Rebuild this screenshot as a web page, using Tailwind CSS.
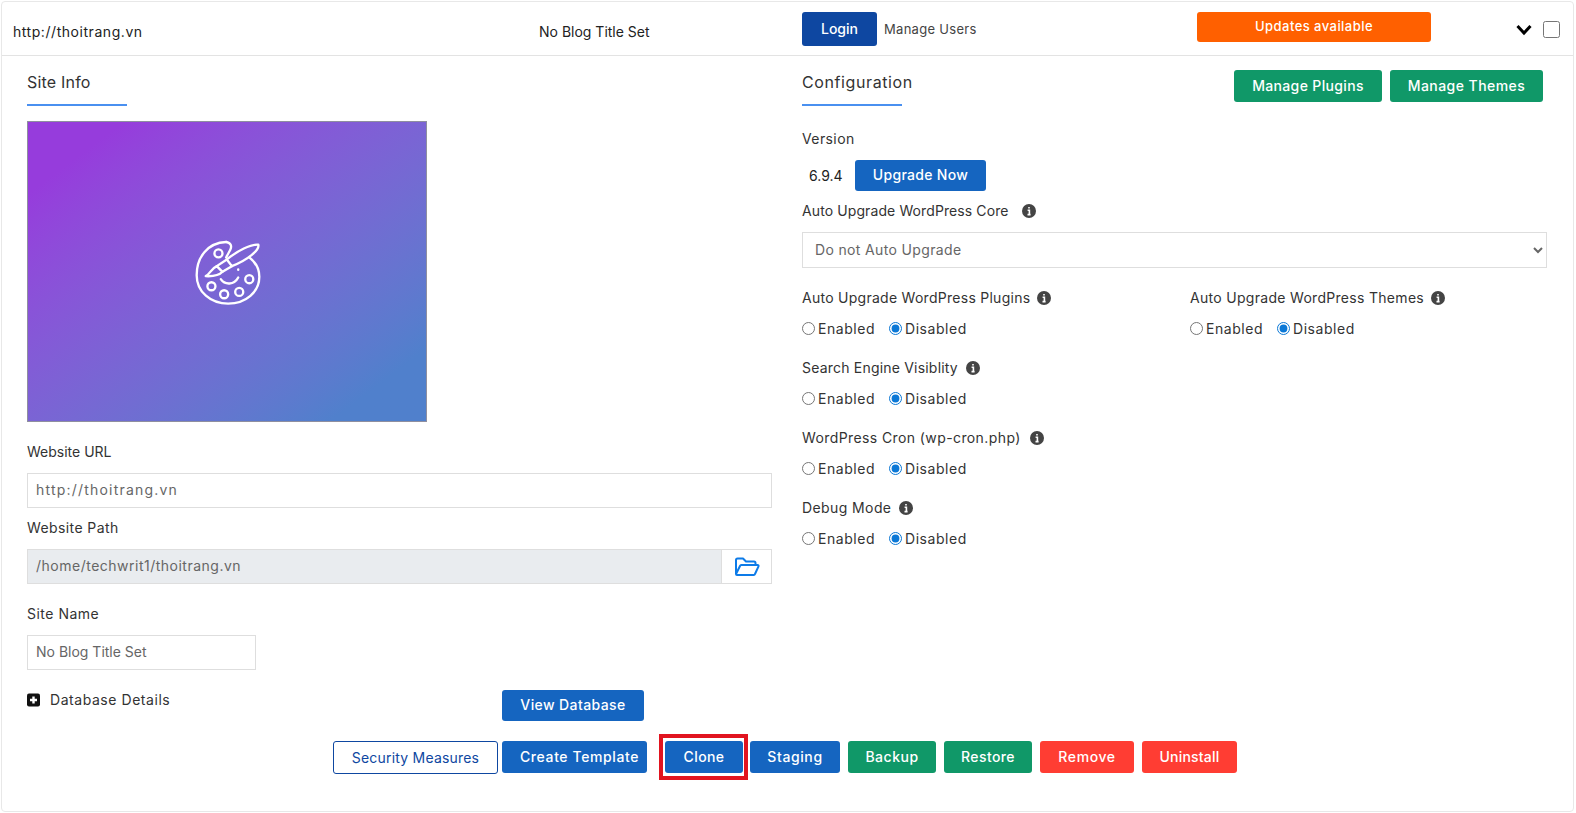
<!DOCTYPE html>
<html>
<head>
<meta charset="utf-8">
<script src="https://cdn.jsdelivr.net/npm/@tailwindcss/browser@4"></script>
<title>Site details</title>
</head>
<body class="bg-white font-['Inter',sans-serif] text-[14px] text-[#333]">
<div class="mx-[1px] mt-[1px] h-[811px] w-[1573px] rounded border border-[#e8e8e8]">

  <!-- header row -->
  <div class="flex h-[54px] items-start border-b border-[#e3e3e3]">
    <div class="w-[537px] pl-[11px] pt-[21px] leading-[18px] tracking-[0.55px] text-[#222]">http://thoitrang.vn</div>
    <div class="w-[263px] pt-[21px] leading-[18px] text-[#222]">No Blog Title Set</div>
    <div class="mt-[10px] flex h-[34px] w-[75px] items-center justify-center rounded-[3px] bg-[#0e47a1] pb-[2px] font-medium text-white">Login</div>
    <div class="ml-[7px] w-[313px] pt-[18px] text-[13px] leading-[18px] tracking-[0.3px] text-[#444]">Manage Users</div>
    <div class="mt-[10px] flex h-[30px] w-[234px] items-center justify-center rounded-[3px] bg-[#ff6000] pb-[1px] text-[13px] font-medium tracking-[0.45px] text-white">Updates available</div>
    <svg class="ml-[85px] mt-[22px]" width="16" height="12" viewBox="0 0 16 12"><path d="M1.5 2 L8 9 L14.5 2" fill="none" stroke="#000" stroke-width="3"/></svg>
    <input type="checkbox" class="ml-[11px] mt-[19px] h-[17px] w-[17px]">
  </div>

  <!-- two columns -->
  <div class="grid grid-cols-[745px_745px] gap-x-[30px] pl-[25px]">

    <!-- site info -->
    <div>
      <div class="pt-[14px] text-[16px] leading-[24px] tracking-[0.2px] text-[#333]">Site Info</div>
      <div class="mt-[10px] h-[2px] w-[100px] bg-[#4a90f0]"></div>
      <div class="mt-[15px] flex h-[301px] w-[400px] items-center justify-center border border-[#8f8f9f] bg-gradient-to-br from-[#963cdc] from-[12%] to-[#5080cc] to-[88%]">
        <svg class="mt-[3px]" width="67" height="67" viewBox="130 60 200 200" fill="none" stroke="#fff" stroke-width="7" stroke-linecap="round" stroke-linejoin="round">
          <path d="M226 66 C170 68 138 112 138 165 C138 215 180 250 232 250 C285 250 325 215 325 170 C325 145 312 125 295 112"/>
          <path d="M226 66 C240 68 244 78 238 90 C234 98 230 104 226 112"/>
          <path d="M228 118 C260 92 300 72 322 74 C326 90 290 120 243 138 Z"/>
          <path d="M198 138 L228 118 M215 155 L243 138"/>
          <path d="M198 138 L215 155 C205 166 185 169 165 168 C178 162 180 146 198 138 Z"/>
          <circle cx="203" cy="100" r="12"/><circle cx="295" cy="177" r="12"/><circle cx="265" cy="215" r="12"/><circle cx="220" cy="222" r="12"/><circle cx="182" cy="198" r="12"/>
          <path d="M210 177 C222 195 250 195 262 172"/>
          <path d="M262 148 L262 149"/>
        </svg>
      </div>

      <div class="mt-[20px] leading-[20px]">Website URL</div>
      <input class="mt-[11px] block h-[35px] w-full border border-[#dedede] px-[8px] pb-[2px] text-[14px] tracking-[1.2px] text-[#666]" value="http://thoitrang.vn">
      <div class="mt-[10px] leading-[20px] tracking-[0.4px]">Website Path</div>
      <div class="mt-[11px] flex h-[35px]">
        <input class="h-full flex-1 border border-[#dedede] bg-[#e9ecef] px-[8px] pb-[2px] text-[14px] tracking-[0.5px] text-[#666]" value="/home/techwrit1/thoitrang.vn">
        <div class="flex w-[50px] items-center justify-center border border-l-0 border-[#dedede]">
          <svg width="26" height="20" viewBox="0 0 26 20" fill="none" stroke="#0d7be8" stroke-width="2" stroke-linejoin="round"><path d="M2 17 V3 a1.5 1.5 0 0 1 1.5 -1.5 H9 L12 4.5 H20 a1.5 1.5 0 0 1 1.5 1.5 V8"/><path d="M2 17 L6 9 a1.5 1.5 0 0 1 1.3 -1 H23.5 a1 1 0 0 1 1 1.4 L21 17 a1.5 1.5 0 0 1 -1.3 1 H3 a1 1 0 0 1 -1 -1 Z"/></svg>
        </div>
      </div>
      <div class="mt-[20px] leading-[20px] tracking-[0.5px]">Site Name</div>
      <input class="mt-[11px] block h-[35px] w-[229px] border border-[#dedede] px-[8px] pb-[2px] text-[14px] text-[#666]" value="No Blog Title Set">

      <div class="mt-[20px] flex items-start">
        <div class="flex w-[475px] items-center">
          <svg width="13" height="14" viewBox="0 0 13 14"><rect x="0" y="0.5" width="13" height="13" rx="2" fill="#111"/><path d="M6.5 3.5 V10.5 M3 7 H10" stroke="#fff" stroke-width="2.4"/></svg>
          <span class="ml-[10px] leading-[20px] tracking-[0.55px]">Database Details</span>
        </div>
        <div class="flex h-[31px] w-[142px] items-center justify-center rounded-[3px] bg-[#1565c0] pb-[2px] font-medium tracking-[0.4px] text-white">View Database</div>
      </div>
    </div>

    <!-- configuration -->
    <div>
      <div class="flex items-start justify-between">
        <div>
          <div class="pt-[14px] text-[16px] leading-[24px] tracking-[0.6px] text-[#333]">Configuration</div>
          <div class="mt-[10px] h-[2px] w-[100px] bg-[#4a90f0]"></div>
        </div>
        <div class="mr-[4px] mt-[14px] flex gap-[8px]">
          <div class="flex h-[32px] w-[148px] items-center justify-center rounded-[3px] bg-[#109868] pb-[2px] font-medium tracking-[0.35px] text-white">Manage Plugins</div>
          <div class="flex h-[32px] w-[153px] items-center justify-center rounded-[3px] bg-[#109868] pb-[2px] font-medium tracking-[0.45px] text-white">Manage Themes</div>
        </div>
      </div>

      <div class="mt-[23px] leading-[20px] tracking-[0.4px]">Version</div>
      <div class="mt-[11px] flex h-[31px] items-center">
        <span class="ml-[7px] w-[46px] text-[#222]">6.9.4</span>
        <div class="flex h-[31px] w-[131px] items-center justify-center rounded-[3px] bg-[#1565c0] pb-[2px] font-medium tracking-[0.3px] text-white">Upgrade Now</div>
      </div>
      <div class="mt-[10px] flex items-center gap-[13px] leading-[20px] tracking-[0.1px]">Auto Upgrade WordPress Core
        <svg width="14" height="14" viewBox="0 0 14 14"><circle cx="7" cy="7" r="7" fill="#444"/><path d="M7 3 V4.6 M5.6 6.2 H7.4 V10.4 M5.5 10.6 H8.6" stroke="#fff" stroke-width="1.6" fill="none"/></svg>
      </div>
      <select class="mt-[11px] block h-[36px] w-full border border-[#dedede] bg-white pb-[2px] pl-[8px] text-[14px] tracking-[0.35px] text-[#666]">
        <option>Do not Auto Upgrade</option>
      </select>

      <div class="mt-[20px] grid grid-cols-[388px_1fr]">
        <div>
          <div class="flex items-center gap-[7px] leading-[20px] tracking-[0.27px]">Auto Upgrade WordPress Plugins
            <svg width="14" height="14" viewBox="0 0 14 14"><circle cx="7" cy="7" r="7" fill="#444"/><path d="M7 3 V4.6 M5.6 6.2 H7.4 V10.4 M5.5 10.6 H8.6" stroke="#fff" stroke-width="1.6" fill="none"/></svg>
          </div>
          <div class="mt-[10px] flex h-[20px] items-center tracking-[0.55px]">
            <input type="radio" name="plugins" class="h-[13px] w-[13px] accent-[#0b78d6]"><span class="ml-[3px] w-[71px]">Enabled</span>
            <input type="radio" name="plugins" class="h-[13px] w-[13px] accent-[#0b78d6]" checked><span class="ml-[3px]">Disabled</span>
          </div>
        </div>
        <div>
          <div class="flex items-center gap-[7px] leading-[20px] tracking-[0.3px]">Auto Upgrade WordPress Themes
            <svg width="14" height="14" viewBox="0 0 14 14"><circle cx="7" cy="7" r="7" fill="#444"/><path d="M7 3 V4.6 M5.6 6.2 H7.4 V10.4 M5.5 10.6 H8.6" stroke="#fff" stroke-width="1.6" fill="none"/></svg>
          </div>
          <div class="mt-[10px] flex h-[20px] items-center tracking-[0.55px]">
            <input type="radio" name="themes" class="h-[13px] w-[13px] accent-[#0b78d6]"><span class="ml-[3px] w-[71px]">Enabled</span>
            <input type="radio" name="themes" class="h-[13px] w-[13px] accent-[#0b78d6]" checked><span class="ml-[3px]">Disabled</span>
          </div>
        </div>
      </div>

      <div class="mt-[20px] flex items-center gap-[8px] leading-[20px] tracking-[0.2px]">Search Engine Visiblity
        <svg width="14" height="14" viewBox="0 0 14 14"><circle cx="7" cy="7" r="7" fill="#444"/><path d="M7 3 V4.6 M5.6 6.2 H7.4 V10.4 M5.5 10.6 H8.6" stroke="#fff" stroke-width="1.6" fill="none"/></svg>
      </div>
      <div class="mt-[10px] flex h-[20px] items-center tracking-[0.55px]">
        <input type="radio" name="search" class="h-[13px] w-[13px] accent-[#0b78d6]"><span class="ml-[3px] w-[71px]">Enabled</span>
        <input type="radio" name="search" class="h-[13px] w-[13px] accent-[#0b78d6]" checked><span class="ml-[3px]">Disabled</span>
      </div>

      <div class="mt-[20px] flex items-center gap-[9px] leading-[20px] tracking-[0.4px]">WordPress Cron (wp-cron.php)
        <svg width="14" height="14" viewBox="0 0 14 14"><circle cx="7" cy="7" r="7" fill="#444"/><path d="M7 3 V4.6 M5.6 6.2 H7.4 V10.4 M5.5 10.6 H8.6" stroke="#fff" stroke-width="1.6" fill="none"/></svg>
      </div>
      <div class="mt-[10px] flex h-[20px] items-center tracking-[0.55px]">
        <input type="radio" name="cron" class="h-[13px] w-[13px] accent-[#0b78d6]"><span class="ml-[3px] w-[71px]">Enabled</span>
        <input type="radio" name="cron" class="h-[13px] w-[13px] accent-[#0b78d6]" checked><span class="ml-[3px]">Disabled</span>
      </div>

      <div class="mt-[20px] flex items-center gap-[8px] leading-[20px] tracking-[0.4px]">Debug Mode
        <svg width="14" height="14" viewBox="0 0 14 14"><circle cx="7" cy="7" r="7" fill="#444"/><path d="M7 3 V4.6 M5.6 6.2 H7.4 V10.4 M5.5 10.6 H8.6" stroke="#fff" stroke-width="1.6" fill="none"/></svg>
      </div>
      <div class="mt-[10px] flex h-[20px] items-center tracking-[0.55px]">
        <input type="radio" name="debug" class="h-[13px] w-[13px] accent-[#0b78d6]"><span class="ml-[3px] w-[71px]">Enabled</span>
        <input type="radio" name="debug" class="h-[13px] w-[13px] accent-[#0b78d6]" checked><span class="ml-[3px]">Disabled</span>
      </div>
    </div>
  </div>

  <!-- action buttons -->
  <div class="mt-[20px] flex pl-[331px] font-medium">
    <div class="flex h-[33px] w-[165px] items-center justify-center rounded-[3px] border border-[#0e47a1] pb-[1px] font-normal tracking-[0.2px] text-[#0e47a1]">Security Measures</div>
    <div class="ml-[4px] flex h-[32px] w-[145px] items-center rounded-[3px] bg-[#1565c0] pb-[2px] pl-[18px] tracking-[0.6px] text-white">Create Template</div>
    <div class="relative ml-[18px] flex h-[32px] w-[78px] items-center justify-center rounded-[3px] bg-[#1565c0] pb-[2px] tracking-[0.4px] text-white">Clone
      <span class="absolute -bottom-[7px] -left-[6px] -right-[5px] -top-[7px] border-[4px] border-[#e1141f]"></span>
    </div>
    <div class="ml-[7px] flex h-[32px] w-[90px] items-center justify-center rounded-[3px] bg-[#1565c0] pb-[2px] tracking-[0.6px] text-white">Staging</div>
    <div class="ml-[8px] flex h-[32px] w-[88px] items-center justify-center rounded-[3px] bg-[#109868] pb-[2px] tracking-[0.5px] text-white">Backup</div>
    <div class="ml-[8px] flex h-[32px] w-[88px] items-center justify-center rounded-[3px] bg-[#109868] pb-[2px] tracking-[0.4px] text-white">Restore</div>
    <div class="ml-[8px] flex h-[32px] w-[94px] items-center justify-center rounded-[3px] bg-[#ff3d33] pb-[2px] tracking-[0.6px] text-white">Remove</div>
    <div class="ml-[8px] flex h-[32px] w-[95px] items-center justify-center rounded-[3px] bg-[#ff3d33] pb-[2px] tracking-[0.2px] text-white">Uninstall</div>
  </div>
</div>
</body>
</html>
